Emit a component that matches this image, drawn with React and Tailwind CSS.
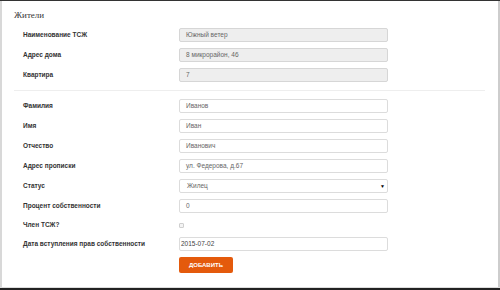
const sans = "font-['Liberation_Sans',Arial,sans-serif]";

const topFields = [
  { label: "Наименование ТСЖ", value: "Южный ветер" },
  { label: "Адрес дома", value: "8 микрорайон, 46" },
  { label: "Квартира", value: "7" },
];

const personFields = [
  { label: "Фамилия", value: "Иванов" },
  { label: "Имя", value: "Иван" },
  { label: "Отчество", value: "Иванович" },
  { label: "Адрес прописки", value: "ул. Федерова, д.67" },
];

const Label = ({ children }) => (
  <div className="w-[156px] shrink-0 text-[6.5px] font-bold leading-none text-[#333]">
    {children}
  </div>
);

const Field = ({ label, value, disabled }) => (
  <div className="flex h-[14px] items-center">
    <Label>{label}</Label>
    <div
      className={`flex h-[14px] w-[209px] items-center rounded-[2px] border px-[6px] text-[6.5px] leading-none text-[#666] ${
        disabled ? "border-[#d6d6d6] bg-[#eeeeee]" : "border-[#dcdcdc] bg-white"
      }`}
    >
      {value}
    </div>
  </div>
);

const App = () => {
  return (
    <div className={`flex h-[290px] w-[500px] flex-col bg-white ${sans}`}>
      <div className="h-[1px] bg-[#333]" />
      <div className="flex-1 border-l-2 border-r-2 border-l-[#d8d8d8] border-r-[#cdcdcd] pl-[12px]">
        <h1 className="mt-[10px] font-['Liberation_Serif',serif] text-[9px] leading-[9px] text-[#333]">
          Жители
        </h1>

        <div className="mt-[8px] space-y-[6px] pl-[9px]">
          {topFields.map((f) => (
            <Field key={f.label} label={f.label} value={f.value} disabled />
          ))}
        </div>

        <div className="mt-[8px] mr-[13px] h-[1px] bg-[#eeeeee]" />

        <div className="mt-[8px] space-y-[6px] pl-[9px]">
          {personFields.map((f) => (
            <Field key={f.label} label={f.label} value={f.value} />
          ))}

          <div className="flex h-[14px] items-center">
            <Label>Статус</Label>
            <div className="flex h-[14px] w-[209px] items-center justify-between rounded-[2px] border border-[#dcdcdc] bg-white pl-[7px] pr-[2px] text-[6.5px] leading-none text-[#666]">
              <span>Жилец</span>
              <span className="text-[5px] text-black">▼</span>
            </div>
          </div>

          <Field label="Процент собственности" value="0" />

          <div className="flex h-[12px] items-center">
            <Label>Член ТСЖ?</Label>
            <div className="h-[5px] w-[5px] rounded-[1px] border border-[#cfcfcf] bg-[#f4f4f4]" />
          </div>

          <div className="flex h-[14px] items-center">
            <Label>Дата вступления прав собственности</Label>
            <div className="flex h-[14px] w-[209px] items-center rounded-[2px] border border-[#dcdcdc] bg-white px-[1px] text-[6.5px] leading-none text-[#444]">
              2015-07-02
            </div>
          </div>

          <div className="flex">
            <div className="w-[156px] shrink-0" />
            <button className="flex h-[16px] w-[54px] items-center justify-center rounded-[2px] bg-[#e45a0c] text-[6px] font-bold leading-none text-white">
              ДОБАВИТЬ
            </button>
          </div>
        </div>
      </div>
      <div className="h-[1px] bg-[#dddddd]" />
      <div className="h-[2px] bg-[#222]" />
    </div>
  );
};

export default App;
